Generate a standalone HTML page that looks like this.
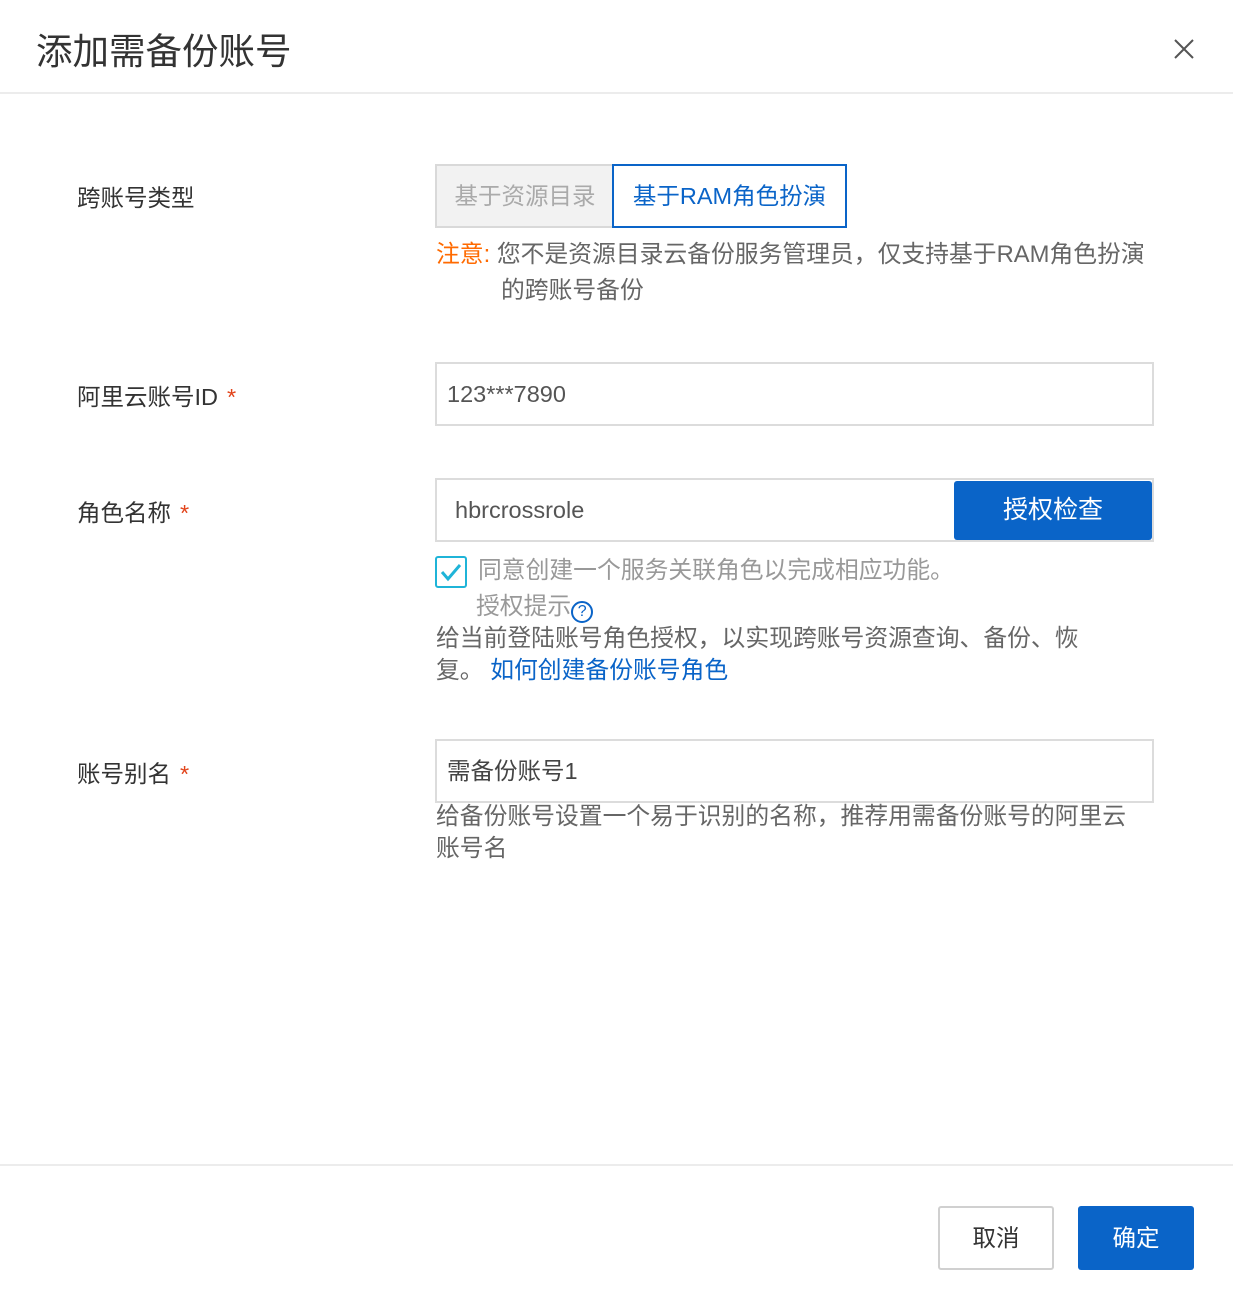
<!DOCTYPE html>
<html><head><meta charset="utf-8"><style>
*{margin:0;padding:0;box-sizing:border-box}
body{width:1233px;height:1308px;background:#fff;font-family:"Liberation Sans","Noto Sans CJK SC",sans-serif;color:#333;position:relative;overflow:hidden}
.a{position:absolute;white-space:nowrap}
.lbl{font-size:23.5px;color:#333;left:77px}
.star{color:#e2441b;margin-left:9px}
.inp{position:absolute;border:2px solid #dcdcdc;background:#fff;font-size:23.5px;color:#555}
</style></head><body>
<div class="a" style="left:36px;top:22px;font-size:36.5px;color:#333">添加需备份账号</div>
<svg class="a" style="left:1172px;top:37px" width="24" height="24" viewBox="0 0 24 24"><path d="M3 3L21 21M21 3L3 21" stroke="#555" stroke-width="2"/></svg>
<div class="a" style="left:0;top:92px;width:1233px;height:2px;background:#ececec"></div>

<div class="a lbl" style="top:179px">跨账号类型</div>
<div class="a" style="left:435px;top:164px;width:178px;height:64px;border:2px solid #d9d9d9;border-right:none;background:#f2f2f2;color:#aaa;font-size:23.5px;line-height:60px;text-align:center">基于资源目录</div>
<div class="a" style="left:612px;top:164px;width:235px;height:64px;border:2px solid #0a64c8;color:#0a64c8;font-size:23.5px;line-height:60px;text-align:center">基于RAM角色扮演</div>
<div class="a" style="left:436px;top:237px;font-size:23.8px;color:#666;line-height:36px"><span style="color:#ff6a00">注意:</span> 您不是资源目录云备份服务管理员，仅支持基于RAM角色扮演</div>
<div class="a" style="left:501px;top:273px;font-size:23.8px;color:#666;line-height:36px">的跨账号备份</div>

<div class="a lbl" style="top:378px">阿里云账号ID<span class="star">*</span></div>
<div class="inp" style="left:435px;top:362px;width:719px;height:64px;line-height:60px;padding-left:10px">123***7890</div>

<div class="a lbl" style="top:494px">角色名称<span class="star">*</span></div>
<div class="inp" style="left:435px;top:478px;width:719px;height:64px;line-height:60px;padding-left:18px">hbrcrossrole</div>
<div class="a" style="left:954px;top:481px;width:198px;height:59px;background:#0a64c8;border-radius:3px;color:#fff;font-size:25px;line-height:59px;text-align:center">授权检查</div>
<div class="a" style="left:435px;top:556px;width:32px;height:32px;border:2px solid #1fb4d8;border-radius:3px"><svg width="28" height="28" viewBox="0 0 28 28"><path d="M5 14L11 21L23 7" stroke="#1fb4d8" stroke-width="3" fill="none"/></svg></div>
<div class="a" style="left:478px;top:554px;font-size:23.8px;color:#999;line-height:34px">同意创建一个服务关联角色以完成相应功能。</div>
<div class="a" style="left:476px;top:590px;font-size:23.8px;color:#999;line-height:34px">授权提示<span style="display:inline-block;width:22px;height:22px;border:2px solid #0a64c8;border-radius:50%;color:#0a64c8;font-size:16px;line-height:18px;text-align:center;vertical-align:-2px">?</span></div>
<div class="a" style="left:436px;top:622px;font-size:23.8px;color:#666;line-height:34px">给当前登陆账号角色授权，以实现跨账号资源查询、备份、恢</div>
<div class="a" style="left:436px;top:654px;font-size:23.8px;color:#666;line-height:34px">复。 <span style="color:#0a64c8">如何创建备份账号角色</span></div>

<div class="a lbl" style="top:755px">账号别名<span class="star">*</span></div>
<div class="inp" style="left:435px;top:739px;width:719px;height:64px;line-height:60px;padding-left:10px;color:#444">需备份账号1</div>
<div class="a" style="left:436px;top:800px;font-size:23.8px;color:#666;line-height:34px">给备份账号设置一个易于识别的名称，推荐用需备份账号的阿里云</div>
<div class="a" style="left:436px;top:832px;font-size:23.8px;color:#666;line-height:34px">账号名</div>

<div class="a" style="left:0;top:1164px;width:1233px;height:2px;background:#ececec"></div>
<div class="a" style="left:938px;top:1206px;width:116px;height:64px;border:2px solid #d0d0d0;border-radius:3px;font-size:23.5px;line-height:60px;text-align:center;color:#333">取消</div>
<div class="a" style="left:1078px;top:1206px;width:116px;height:64px;background:#0a64c8;border-radius:3px;font-size:23.5px;line-height:64px;text-align:center;color:#fff">确定</div>
</body></html>
